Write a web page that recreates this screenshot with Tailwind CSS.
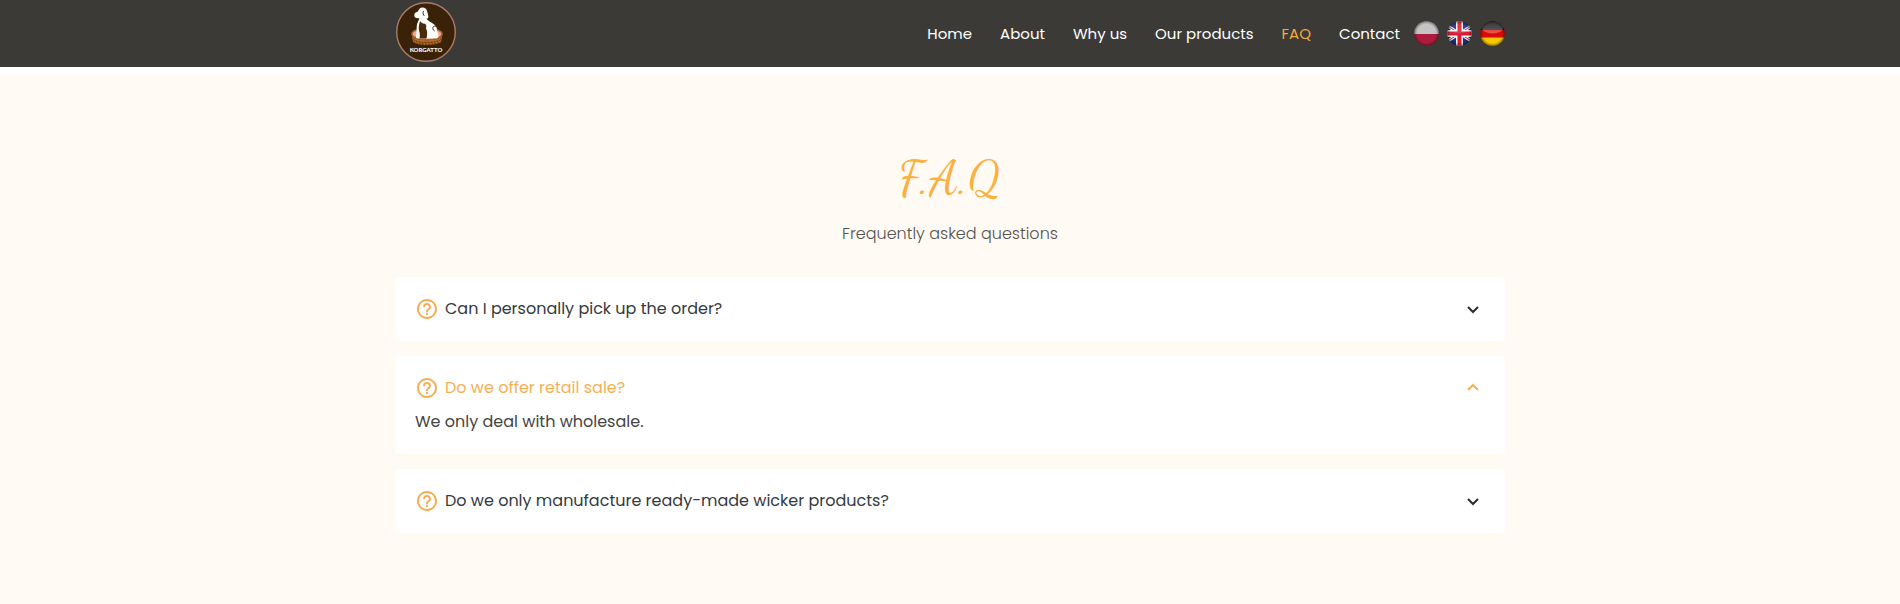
<!DOCTYPE html>
<html lang="en">
<head>
<meta charset="utf-8">
<meta name="viewport" content="width=device-width, initial-scale=1">
<title>Korgatto - FAQ</title>
<script src="https://cdn.jsdelivr.net/npm/@tailwindcss/browser@4"></script>
</head>
<body class="min-h-screen bg-[#fffaf3] font-['Poppins','Inter',sans-serif] text-[#36393c]">
<header class="border-b-8 border-white bg-[#3b3a37]">
  <div class="mx-auto flex h-[67px] max-w-[1110px] items-center justify-between py-px">
    <a href="#" aria-label="Korgatto" class="self-start">
      <svg class="size-[62px]" viewBox="0 0 62 62">
        <circle cx="31" cy="31" r="29.3" fill="#3a2209" stroke="#a97b6c" stroke-width="1.4"/>
        <ellipse cx="32" cy="33" rx="15" ry="5.5" fill="#f3aa98" stroke="#a9642c" stroke-width="1.6"/>
        <path d="M19.500 13c.3-1.500 2-2 3.500-2.500.5-2.500 2.500-4.300 5-4 3 .3 4 2.500 4.500 5 .4 2 1.500 4.500.5 5.500s-2.500.5-2.500-.5c2 3 5 4.500 8 6.500 2.500 1.600 3.700 4 3.500 6.500l1.500 5c.3 2.500-1.500 3-4 3H22.500c-1 0-1.500-1-1.500-2 1-4 .5-7 .7-10 .1-3 1.800-5.500 2.800-8.500-2 .5-4.500 0-5-1.500-.3-.8-.3-1.700 0-2.500z" fill="#fff"/>
        <path d="M25 20c2 2.500 3.500 3 5 2.500 1.500 1.500 1.500 3.500 1 5 1.500 2.500 1.500 6 .5 10h-7c.8-4 .2-5.500-.5-8-.7-3 .3-6 1-9.500z" fill="#4b2a0c"/>
        <path d="M39.500 30c-2-1-2.500-5 .5-5 1.500 0 2.500.8 3 2M28.500 10c-.8 1.500-.6 4 1 5" fill="none" stroke="#4b2a0c" stroke-width="1"/>
        <path d="M16.500 33c0 1.500 1 3 3 4 6 3 19 3 25 0 2-1 3-2.500 3-4l-1.500 8c-4 4-24 4-28 0z" fill="#b36b29"/>
        <path d="M18 38.500c5 4 23 4 28 0M18.500 41c5 3 22 3 27 0" fill="none" stroke="#60320d" stroke-width="1" stroke-dasharray="2 1"/>
        <text x="31" y="51" text-anchor="middle" fill="#fff" font-family="Lato, sans-serif" font-size="6" font-weight="900">KORGATTO</text>
      </svg>
    </a>
    <div class="flex items-center gap-[14px]">
      <nav class="flex items-center gap-7 text-[15px] leading-6 text-white">
        <a href="#">Home</a>
        <a href="#">About</a>
        <a href="#">Why us</a>
        <a href="#">Our products</a>
        <a href="#" class="text-[#f3aa40]">FAQ</a>
        <a href="#">Contact</a>
      </nav>
      <div class="flex items-center gap-2">
        <a href="#" aria-label="Polski">
          <svg class="size-[25px]" viewBox="0 0 25 25">
            <defs>
              <clipPath id="disc"><circle cx="12.5" cy="12.5" r="12.2"/></clipPath>
              <radialGradient id="shade"><stop offset=".75" stop-opacity="0"/><stop offset="1" stop-opacity=".4"/></radialGradient>
              <linearGradient id="gloss" x2="0" y2="1"><stop stop-color="#fff" stop-opacity=".15"/><stop offset="1" stop-color="#fff" stop-opacity=".3"/></linearGradient>
            </defs>
            <g clip-path="url(#disc)"><path fill="#c4c4c4" d="M0 0h25v13H0z"/><path fill="#ad1c3c" d="M0 13h25v12H0z"/><path fill="url(#shade)" d="M0 0h25v25H0z"/></g>
          </svg>
        </a>
        <a href="#" aria-label="English">
          <svg class="size-[25px]" viewBox="0 0 25 25">
            <g clip-path="url(#disc)">
              <path fill="#172f7b" d="M0 0h25v25H0z"/>
              <path stroke="#eee" stroke-width="3" d="M-4 2l33 21M29 2L-4 23"/>
              <path stroke="#d02038" stroke-width="1" d="M-4 2l33 21M29 2L-4 23"/>
              <path stroke="#f2f2f2" stroke-width="7" d="M12.5 0v25M0 12.5h25"/>
              <path stroke="#d81c34" stroke-width="4" d="M12.5 0v25M0 12.5h25"/>
              <ellipse cx="12.5" cy="6.5" rx="10.5" ry="6" fill="url(#gloss)" opacity=".5"/>
              <path fill="url(#shade)" d="M0 0h25v25H0z"/>
            </g>
          </svg>
        </a>
        <a href="#" aria-label="Deutsch">
          <svg class="size-[25px]" viewBox="0 0 25 25">
            <g clip-path="url(#disc)">
              <path fill="#171717" d="M0 0h25v9H0z"/><path fill="#dc0b08" d="M0 9h25v7.5H0z"/><path fill="#f8c900" d="M0 16.5h25V25H0z"/>
              <ellipse cx="12.5" cy="6.5" rx="11" ry="6" fill="url(#gloss)"/>
              <path fill="url(#shade)" d="M0 0h25v25H0z"/>
            </g>
          </svg>
        </a>
      </div>
    </div>
  </div>
</header>
<main class="mx-auto max-w-[1110px] pt-[75px] pb-16">
  <h1 class="text-center font-['Dancing_Script','Liberation_Serif',cursive] text-5xl leading-[58px] text-[#fbb03f]">F.A.Q</h1>
  <p class="mt-[14px] text-center text-base leading-6 font-light text-[#555250]">Frequently asked questions</p>
  <div class="mt-[31px] flex flex-col gap-[15px] text-base leading-6">
    <section class="rounded bg-white p-5">
      <button type="button" aria-expanded="false" class="flex w-full items-center text-left text-[#343a40]">
        <svg class="mr-[6px] size-6 fill-[#f5b056]" viewBox="0 0 24 24"><path d="M12 6a3.939 3.939 0 0 0-3.934 3.934h2C10.066 8.867 10.934 8 12 8s1.934.867 1.934 1.934c0 .598-.481 1.032-1.216 1.626a9.208 9.208 0 0 0-.691.599c-.998.997-1.027 2.056-1.027 2.174V15h2l-.001-.633c.001-.016.033-.386.441-.793.15-.15.339-.3.535-.458.779-.631 1.958-1.584 1.958-3.182A3.937 3.937 0 0 0 12 6zm-1 10h2v2h-2z"/><path d="M12 2C6.486 2 2 6.486 2 12s4.486 10 10 10 10-4.486 10-10S17.514 2 12 2zm0 18c-4.411 0-8-3.589-8-8s3.589-8 8-8 8 3.589 8 8-3.589 8-8 8z"/></svg>
        <span class="grow">Can I personally pick up the order?</span>
        <svg class="size-6 fill-[#292d30]" viewBox="0 0 24 24"><path d="M16.293 9.293 12 13.586 7.707 9.293l-1.414 1.414L12 16.414l5.707-5.707z"/></svg>
      </button>
    </section>
    <section class="rounded bg-white p-5">
      <button type="button" aria-expanded="true" aria-controls="retail" class="flex w-full items-center text-left text-[#f5b056]">
        <svg class="mr-[6px] size-6 fill-[#f5b056]" viewBox="0 0 24 24"><path d="M12 6a3.939 3.939 0 0 0-3.934 3.934h2C10.066 8.867 10.934 8 12 8s1.934.867 1.934 1.934c0 .598-.481 1.032-1.216 1.626a9.208 9.208 0 0 0-.691.599c-.998.997-1.027 2.056-1.027 2.174V15h2l-.001-.633c.001-.016.033-.386.441-.793.15-.15.339-.3.535-.458.779-.631 1.958-1.584 1.958-3.182A3.937 3.937 0 0 0 12 6zm-1 10h2v2h-2z"/><path d="M12 2C6.486 2 2 6.486 2 12s4.486 10 10 10 10-4.486 10-10S17.514 2 12 2zm0 18c-4.411 0-8-3.589-8-8s3.589-8 8-8 8 3.589 8 8-3.589 8-8 8z"/></svg>
        <span class="grow">Do we offer retail sale?</span>
        <svg class="size-6 fill-[#f5b056]" viewBox="0 0 24 24"><path d="m6.293 13.293 1.414 1.414L12 10.414l4.293 4.293 1.414-1.414L12 7.586z"/></svg>
      </button>
      <p id="retail" class="mt-[10px] text-[#444]">We only deal with wholesale.</p>
    </section>
    <section class="rounded bg-white p-5">
      <button type="button" aria-expanded="false" class="flex w-full items-center text-left text-[#343a40]">
        <svg class="mr-[6px] size-6 fill-[#f5b056]" viewBox="0 0 24 24"><path d="M12 6a3.939 3.939 0 0 0-3.934 3.934h2C10.066 8.867 10.934 8 12 8s1.934.867 1.934 1.934c0 .598-.481 1.032-1.216 1.626a9.208 9.208 0 0 0-.691.599c-.998.997-1.027 2.056-1.027 2.174V15h2l-.001-.633c.001-.016.033-.386.441-.793.15-.15.339-.3.535-.458.779-.631 1.958-1.584 1.958-3.182A3.937 3.937 0 0 0 12 6zm-1 10h2v2h-2z"/><path d="M12 2C6.486 2 2 6.486 2 12s4.486 10 10 10 10-4.486 10-10S17.514 2 12 2zm0 18c-4.411 0-8-3.589-8-8s3.589-8 8-8 8 3.589 8 8-3.589 8-8 8z"/></svg>
        <span class="grow">Do we only manufacture ready-made wicker products?</span>
        <svg class="size-6 fill-[#292d30]" viewBox="0 0 24 24"><path d="M16.293 9.293 12 13.586 7.707 9.293l-1.414 1.414L12 16.414l5.707-5.707z"/></svg>
      </button>
    </section>
  </div>
</main>
</body>
</html>
